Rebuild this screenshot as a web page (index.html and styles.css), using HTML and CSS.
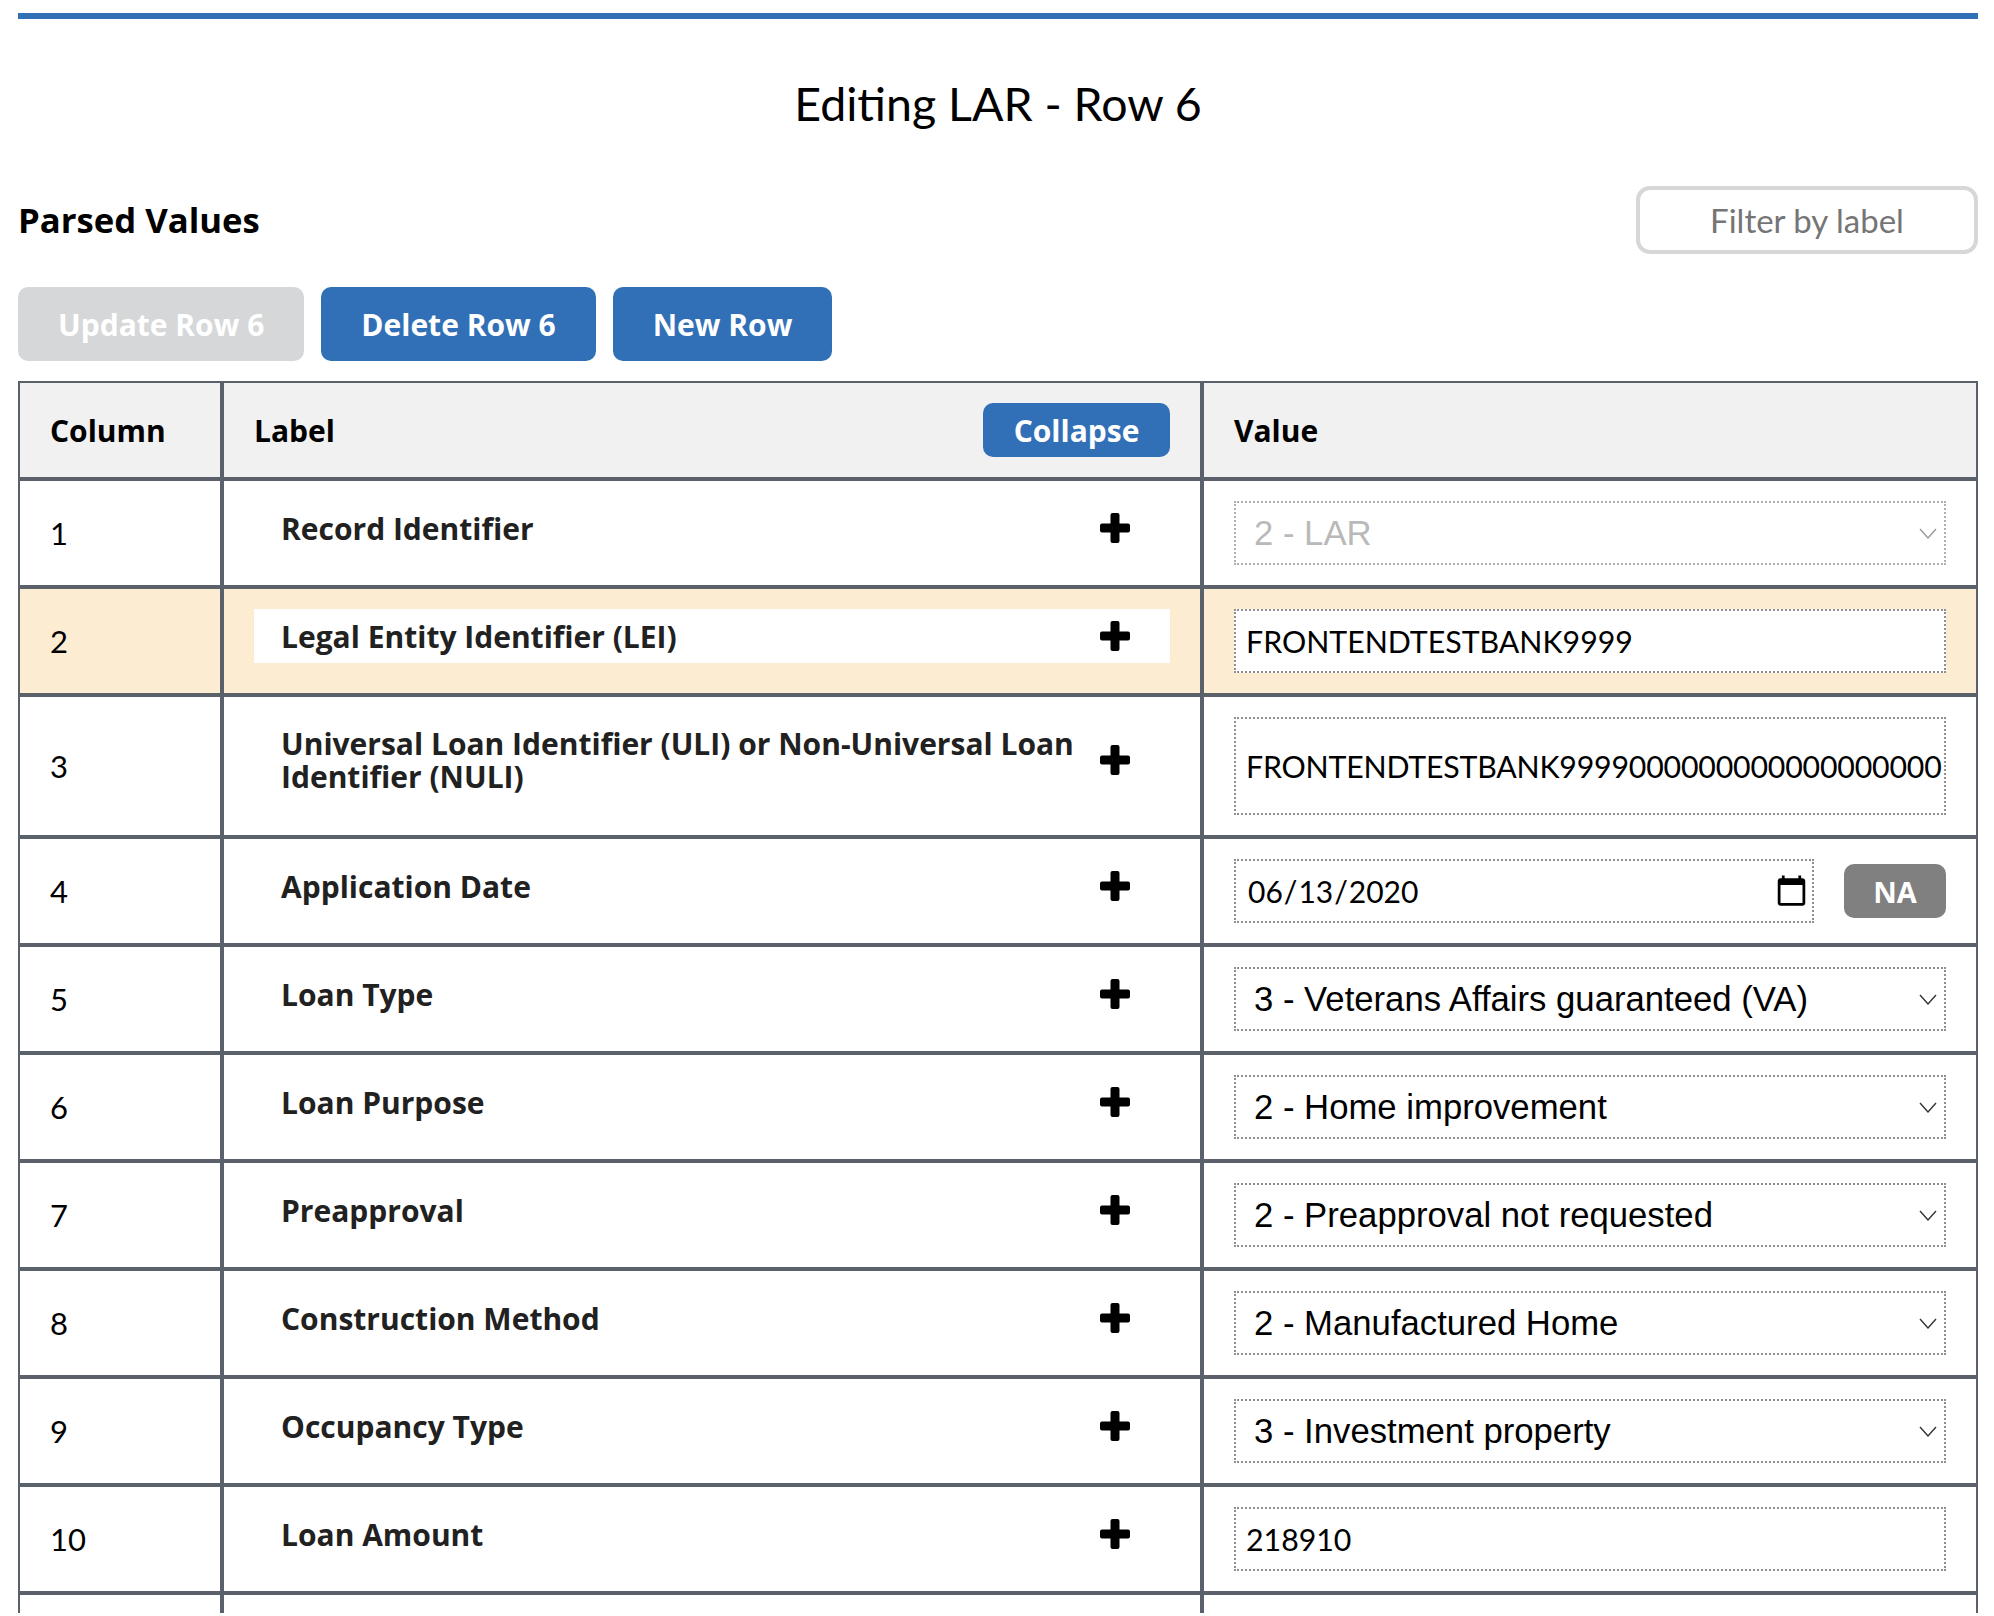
FILE: index.html
```html
<!DOCTYPE html>
<html lang="en">
<head>
    <meta charset="UTF-8">
    <title>Editing LAR - Row 6</title>
    <link rel="stylesheet" href="styles.css">
</head>
<body>
    <svg class="defs" width="0" height="0">
        <symbol id="plus" viewBox="0 0 30 30"><path d="M10.5 2a2 2 0 0 1 2-2h5a2 2 0 0 1 2 2v8.500h8.500a2 2 0 0 1 2 2v5a2 2 0 0 1-2 2h-8.500v8.500a2 2 0 0 1-2 2h-5a2 2 0 0 1-2-2v-8.500H2a2 2 0 0 1-2-2v-5a2 2 0 0 1 2-2h8.500z"/></symbol>
        <symbol id="chevron" viewBox="0 0 18 11"><path d="M1 1l8 9 8-9" fill="none" stroke="currentColor" stroke-width="1.400"/></symbol>
    </svg>

    <div class="page">
        <h1 class="title">Editing LAR - Row 6</h1>

        <div class="parsed-head">
            <h2>Parsed Values</h2>
            <input class="filter" type="text" placeholder="Filter by label">
        </div>

        <!-- Row actions -->
        <div class="actions">
            <button class="btn" disabled>Update Row 6</button>
            <button class="btn">Delete Row 6</button>
            <button class="btn">New Row</button>
        </div>

        <table class="lar-table">
            <colgroup>
                <col class="col-num">
                <col class="col-label">
                <col class="col-value">
            </colgroup>
            <thead>
                <tr>
                    <th>Column</th>
                    <th>
                        <div class="label-head">Label <button class="btn-collapse">Collapse</button></div>
                    </th>
                    <th>Value</th>
                </tr>
            </thead>
            <tbody>
                <tr>
                    <td class="num">1</td>
                    <td><div class="field-label">Record Identifier <svg class="plus"><use href="#plus"/></svg></div></td>
                    <td>
                        <div class="select-wrap disabled">
                            <select disabled><option>2 - LAR</option></select>
                            <svg class="chevron"><use href="#chevron"/></svg>
                        </div>
                    </td>
                </tr>
                <tr class="active">
                    <td class="num">2</td>
                    <td><div class="field-label">Legal Entity Identifier (LEI) <svg class="plus"><use href="#plus"/></svg></div></td>
                    <td><input class="text-input" type="text" value="FRONTENDTESTBANK9999"></td>
                </tr>
                <tr>
                    <td class="num">3</td>
                    <td><div class="field-label">Universal Loan Identifier (ULI) or Non-Universal Loan Identifier (NULI) <svg class="plus"><use href="#plus"/></svg></div></td>
                    <td><input class="text-input tall" type="text" value="FRONTENDTESTBANK9999000000000000000000"></td>
                </tr>
                <tr>
                    <td class="num">4</td>
                    <td><div class="field-label">Application Date <svg class="plus"><use href="#plus"/></svg></div></td>
                    <td>
                        <div class="date-row">
                            <input class="text-input date-input" type="date" value="2020-06-13">
                            <button class="btn-na">NA</button>
                        </div>
                    </td>
                </tr>
                <tr>
                    <td class="num">5</td>
                    <td><div class="field-label">Loan Type <svg class="plus"><use href="#plus"/></svg></div></td>
                    <td>
                        <div class="select-wrap">
                            <select><option>3 - Veterans Affairs guaranteed (VA)</option></select>
                            <svg class="chevron"><use href="#chevron"/></svg>
                        </div>
                    </td>
                </tr>
                <tr>
                    <td class="num">6</td>
                    <td><div class="field-label">Loan Purpose <svg class="plus"><use href="#plus"/></svg></div></td>
                    <td>
                        <div class="select-wrap">
                            <select><option>2 - Home improvement</option></select>
                            <svg class="chevron"><use href="#chevron"/></svg>
                        </div>
                    </td>
                </tr>
                <tr>
                    <td class="num">7</td>
                    <td><div class="field-label">Preapproval <svg class="plus"><use href="#plus"/></svg></div></td>
                    <td>
                        <div class="select-wrap">
                            <select><option>2 - Preapproval not requested</option></select>
                            <svg class="chevron"><use href="#chevron"/></svg>
                        </div>
                    </td>
                </tr>
                <tr>
                    <td class="num">8</td>
                    <td><div class="field-label">Construction Method <svg class="plus"><use href="#plus"/></svg></div></td>
                    <td>
                        <div class="select-wrap">
                            <select><option>2 - Manufactured Home</option></select>
                            <svg class="chevron"><use href="#chevron"/></svg>
                        </div>
                    </td>
                </tr>
                <tr>
                    <td class="num">9</td>
                    <td><div class="field-label">Occupancy Type <svg class="plus"><use href="#plus"/></svg></div></td>
                    <td>
                        <div class="select-wrap">
                            <select><option>3 - Investment property</option></select>
                            <svg class="chevron"><use href="#chevron"/></svg>
                        </div>
                    </td>
                </tr>
                <tr>
                    <td class="num">10</td>
                    <td><div class="field-label">Loan Amount <svg class="plus"><use href="#plus"/></svg></div></td>
                    <td><input class="text-input" type="text" value="218910"></td>
                </tr>
                <tr class="cut-row">
                    <td></td>
                    <td></td>
                    <td></td>
                </tr>
            </tbody>
        </table>
    </div>
</body>
</html>
```

FILE: styles.css
```css
body {
    font-family: "Lato", "Open Sans", sans-serif;
    margin: 0;
    padding: 0;
    background-color: white;
    color: black;
}

.defs {
    position: absolute;
}

/* the capture stops just under row 10 */
.page {
    width: 1960px;
    height: 1594px;
    margin: 13px 0 0 18px;
    border-top: 6px solid #3170b7;
    overflow: hidden;
}

.title {
    margin: 51px 0 0;
    font-size: 46.500px;
    font-weight: 400;
    line-height: 66px;
    text-align: center;
}

.parsed-head {
    display: flex;
    justify-content: space-between;
    align-items: center;
    margin-top: 50px;
}

.parsed-head h2 {
    margin: 0 0 2px;
    font-family: "Open Sans", sans-serif;
    font-size: 34.700px;
    font-weight: 700;
}

.filter {
    box-sizing: border-box;
    width: 342px;
    height: 68px;
    border: 4px solid #d6d7d9;
    border-radius: 14px;
    font-family: inherit;
    font-size: 33px;
    text-align: center;
}

.filter::placeholder {
    color: #757575;
}

.actions {
    display: flex;
    gap: 17px;
    margin-top: 33px;
}

.btn {
    height: 74px;
    padding: 0 40px;
    background-color: #3170b7;
    color: white;
    font-family: "Open Sans", sans-serif;
    font-size: 30px;
    font-weight: 700;
    border: none;
    border-radius: 10px;
}

.btn:disabled {
    background-color: #d6d7d9;
}

.lar-table {
    width: 1960px;
    margin-top: 20px;
    table-layout: fixed;
    border-collapse: separate;
    border-spacing: 0;
}

.col-num {
    width: 204px;
}

.col-label {
    width: 980px;
}

.col-value {
    width: 776px;
}

.lar-table th,
.lar-table td {
    padding: 20px 30px;
    border: 2px solid #5b616b;
    font-size: 31px;
    text-align: left;
    vertical-align: top;
}

.lar-table th {
    background-color: #f1f1f1;
    font-family: "Open Sans", sans-serif;
    font-size: 30px;
    font-weight: 700;
    vertical-align: middle;
}

.lar-table td.num {
    vertical-align: middle;
}

.label-head {
    display: flex;
    justify-content: space-between;
    align-items: center;
}

.btn-collapse {
    width: 187px;
    height: 54px;
    background-color: #3170b7;
    color: white;
    font-family: "Open Sans", sans-serif;
    font-size: 30px;
    font-weight: 700;
    border: none;
    border-radius: 10px;
    padding: 0;
}

.field-label {
    display: flex;
    justify-content: space-between;
    align-items: center;
    gap: 20px;
    box-sizing: border-box;
    min-height: 54px;
    padding: 10px 40px 10px 27px;
    background-color: white;
    font-family: "Open Sans", sans-serif;
    font-size: 30px;
    font-weight: 700;
    line-height: 33px;
    color: #212121;
}

.plus {
    flex: none;
    width: 30px;
    height: 30px;
    fill: black;
}

.active td {
    background-color: #fbecd2;
}

.text-input,
.select-wrap select {
    display: block;
    box-sizing: border-box;
    width: 100%;
    height: 64px;
    margin: 0;
    border: 2px dotted #8f8f8f;
    border-radius: 0;
    background-color: white;
    color: black;
    outline: none;
}

.text-input {
    padding: 0 0 0 10px;
    font-family: inherit;
    font-size: 30.300px;
}

.text-input.tall {
    height: 98px;
    letter-spacing: -0.200px;
}

.date-row {
    display: flex;
    align-items: center;
    gap: 30px;
}

.date-input {
    flex: 1;
    padding-left: 11px;
    padding-right: 3px;
    font-size: 30px;
}

.date-input::-webkit-calendar-picker-indicator {
    width: 35px;
    height: 35px;
    padding: 0;
    margin: 0;
}

.btn-na {
    flex: none;
    width: 102px;
    height: 54px;
    padding: 0;
    background-color: #808080;
    color: white;
    font-family: "Open Sans", sans-serif;
    font-size: 29px;
    font-weight: 700;
    border: none;
    border-radius: 10px;
}

.select-wrap {
    position: relative;
    color: #333;
}

.select-wrap select {
    padding: 0 40px 0 18px;
    font-family: "Liberation Sans", Arial, sans-serif;
    font-size: 34.700px;
    appearance: none;
}

.chevron {
    position: absolute;
    top: 27px;
    right: 9px;
    width: 18px;
    height: 11px;
}

.select-wrap.disabled {
    color: #999;
}

.select-wrap.disabled select {
    color: #9c9c9c;
}

.cut-row td {
    height: 64px;
}
```
